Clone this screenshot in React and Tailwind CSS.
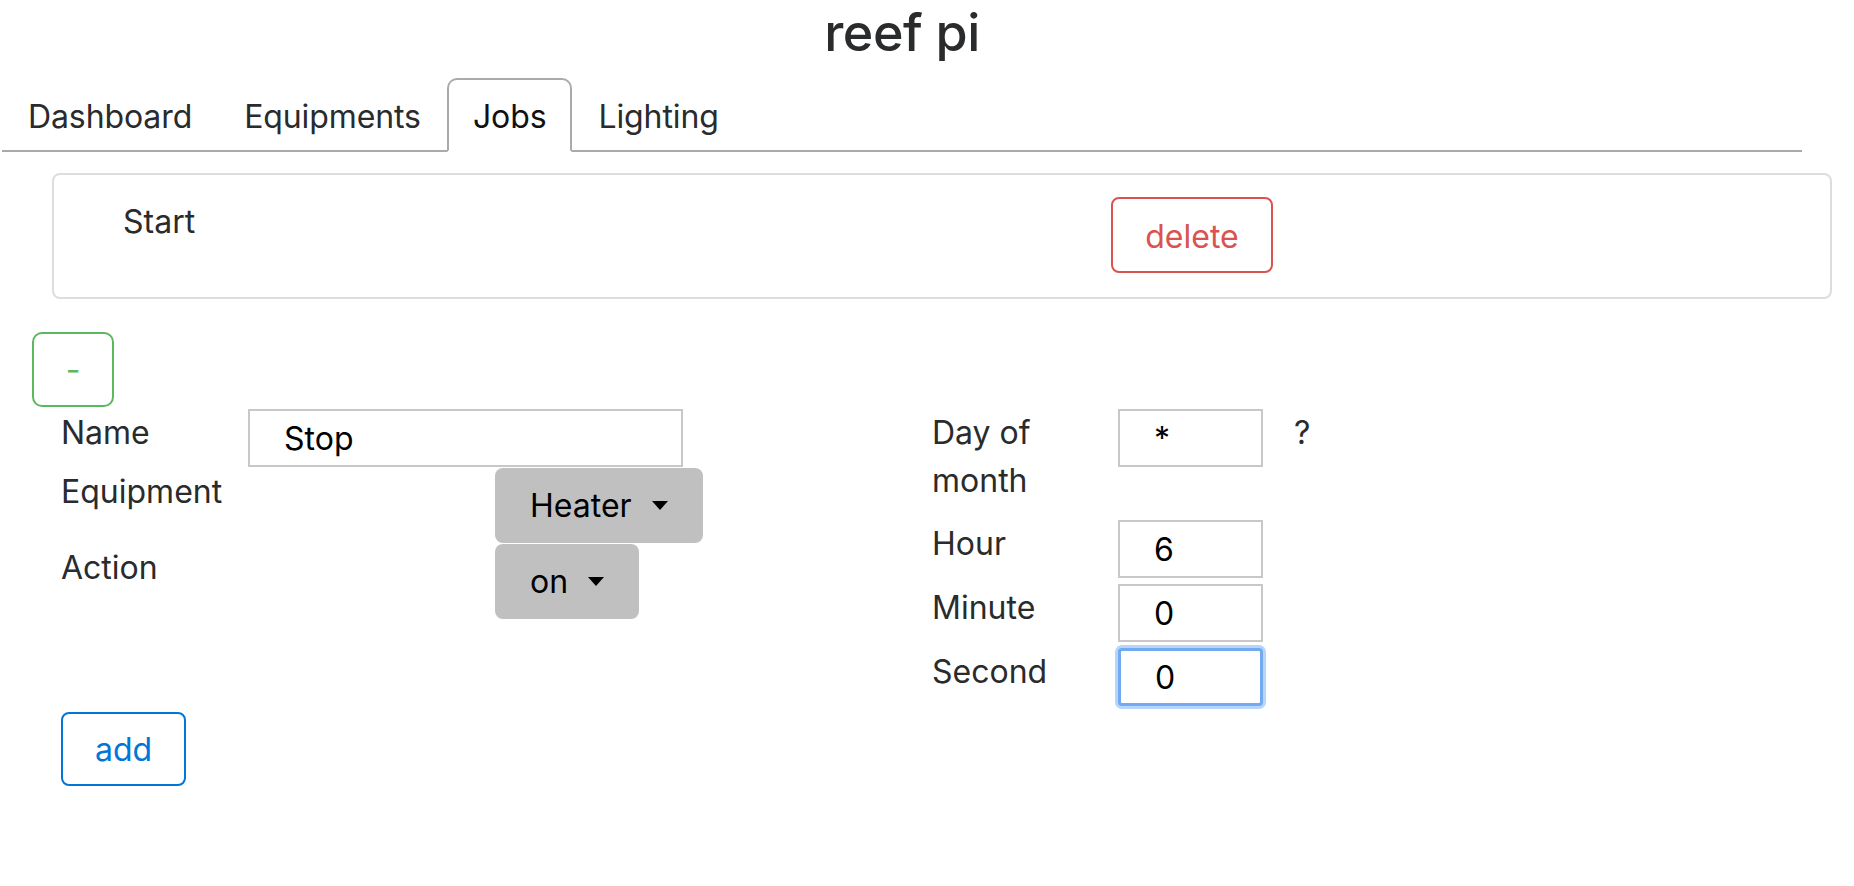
import { useState } from 'react'

function Caret() {
  return (
    <svg width="16" height="9" viewBox="0 0 16 9" className="shrink-0">
      <path d="M0 0 L16 0 L8 9 Z" fill="#000" />
    </svg>
  )
}

function Dropdown({ label }) {
  return (
    <button className="h-[75px] px-[35px] bg-[#c0c0c0] rounded-[8px] flex items-center gap-[20px] text-black text-[32px] leading-[48px]">
      <span>{label}</span>
      <Caret />
    </button>
  )
}

function TextBox({ value, width, focused }) {
  return (
    <input
      readOnly
      value={value}
      className={`h-[58px] ${width} pl-[34px] text-[32px] text-black bg-white outline-none ${
        focused
          ? 'border-[3px] border-[#72aaf2] rounded-[4px] shadow-[0_0_0_3px_rgba(150,195,250,0.7)]'
          : 'border-2 border-[#c8c8c8]'
      }`}
    />
  )
}

const tabs = ['Dashboard', 'Equipments', 'Jobs', 'Lighting']

export default function App() {
  const [active] = useState('Jobs')

  return (
    <div className="w-[1854px] min-h-[886px] bg-white font-['Inter',sans-serif] text-[#292b2c]">
      {/* title */}
      <div className="ml-[2px] w-[1800px] h-[78px] pt-[2px] text-center text-[52px] leading-[62px] font-medium tracking-[-0.5px]">
        reef pi
      </div>

      {/* tabs */}
      <ul className="ml-[2px] w-[1800px] flex border-b-2 border-[#aaaaaa]">
        {tabs.map((t) => (
          <li key={t} className="-mb-[2px]">
            <div
              className={`px-[24px] pt-[13px] pb-[9px] text-[32px] leading-[48px] tracking-[-0.1px] border-2 rounded-t-[10px] ${
                t === active ? 'border-[#aaaaaa] border-b-white bg-white text-[#111]' : 'border-transparent'
              }`}
            >
              {t}
            </div>
          </li>
        ))}
      </ul>

      {/* job card */}
      <div className="mt-[21px] ml-[52px] w-[1780px] h-[126px] border-2 border-[#dddddd] rounded-[8px]">
        <div className="flex items-start pt-[22px] pl-[69px]">
          <div className="w-[988px] text-[32px] leading-[48px] pt-[1px]">Start</div>
          <button className="h-[76px] w-[162px] pt-[3px] border-2 border-[#d9534f] rounded-[8px] text-[#d9534f] text-[32px] leading-[48px]">
            delete
          </button>
        </div>
      </div>

      {/* toggle */}
      <button className="mt-[33px] ml-[32px] w-[82px] h-[75px] border-2 border-[#5cb85c] rounded-[10px] text-[#5cb85c] text-[32px] leading-[48px] flex items-center justify-center">
        -
      </button>

      {/* new job form */}
      <div className="mt-[2px] flex text-[32px] leading-[48px]">
        <div className="ml-[61px] w-[871px]">
          <div className="flex items-start">
            <div className="w-[187px]">Name</div>
            <TextBox value="Stop" width="w-[435px]" />
          </div>
          <div className="mt-[1px] flex items-start">
            <div className="w-[434px]">Equipment</div>
            <Dropdown label="Heater" />
          </div>
          <div className="mt-[1px] flex items-start">
            <div className="w-[434px]">Action</div>
            <Dropdown label="on" />
          </div>
        </div>

        <div>
          <div className="flex items-start">
            <div className="w-[186px]">
              Day of
              <br />
              month
            </div>
            <TextBox value="*" width="w-[145px]" />
            <div className="ml-[31px]">?</div>
          </div>
          <div className="mt-[15px] flex items-start">
            <div className="w-[186px]">Hour</div>
            <TextBox value="6" width="w-[145px]" />
          </div>
          <div className="mt-[6px] flex items-start">
            <div className="w-[186px]">Minute</div>
            <TextBox value="0" width="w-[145px]" />
          </div>
          <div className="mt-[6px] flex items-start">
            <div className="w-[186px]">Second</div>
            <TextBox value="0" width="w-[145px]" focused />
          </div>
        </div>
      </div>

      <button className="mt-[6px] ml-[61px] w-[125px] h-[74px] pt-[2px] border-2 border-[#0275d8] rounded-[8px] text-[#0275d8] text-[32px] leading-[48px]">
        add
      </button>
    </div>
  )
}
